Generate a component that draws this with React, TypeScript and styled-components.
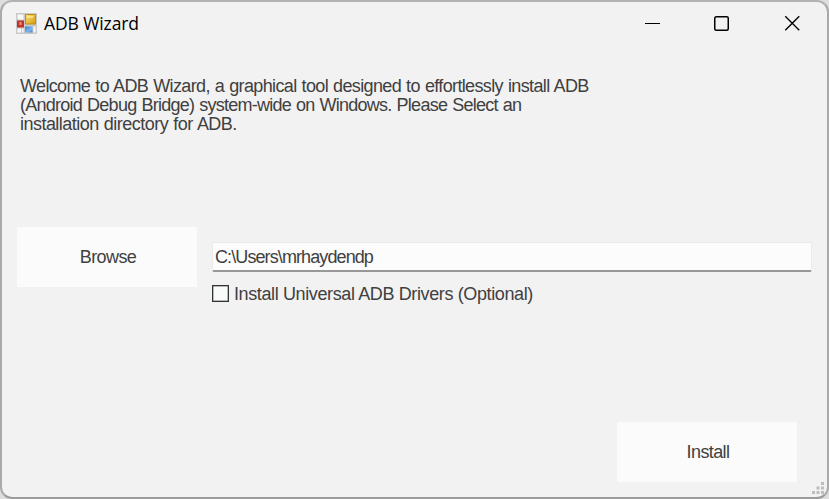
import React from "react";
import styled, { createGlobalStyle } from "styled-components";

const GlobalStyle = createGlobalStyle`
  * { box-sizing: border-box; }
  body { margin: 0; background: #dedede; }
`;

const Window = styled.main`
  width: 829px;
  height: 499px;
  display: flex;
  flex-direction: column;
  background: #f2f2f2;
  border: 2px solid #aaaaaa;
  border-top-color: #b3b3b3;
  border-bottom-color: #9c9c9c;
  border-radius: 12px;
  overflow: hidden;
  color: #404040;
  font-family: "Liberation Sans", Arial, sans-serif;
  font-size: 18px;
`;

const TitleBar = styled.header`
  height: 46px;
  flex: none;
  display: flex;
  align-items: center;
  padding: 0 0 4px 14px;
  color: #000;
`;

const Title = styled.h1`
  flex: 1;
  margin: 0 0 0 7px;
  font: 400 17.5px/24px "Open Sans", sans-serif;
  letter-spacing: -0.1px;
`;

const Controls = styled.div`
  display: flex;
`;

const ControlButton = styled.button`
  width: 70px;
  height: 42px;
  padding: 0;
  border: 0;
  background: none;
  display: grid;
  place-items: center;
`;

const Welcome = styled.p`
  margin: 29px 0 0 18px;
  line-height: 19px;
`;

const Line = styled.span<{ $spacing: number }>`
  display: block;
  width: max-content;
  letter-spacing: ${(p) => p.$spacing}px;
  word-spacing: 0.7px;
`;

const Form = styled.section`
  display: flex;
  gap: 15px;
  margin: 93px 0 0 15px;
`;

const ActionButton = styled.button`
  width: 180px;
  height: 60px;
  flex: none;
  padding: 0 0 0 2px;
  border: 0;
  background: #fbfbfb;
  color: inherit;
  font: inherit;
  letter-spacing: -0.6px;
`;

const Fields = styled.div`
  width: 600px;
  padding-top: 15px;
`;

const PathInput = styled.input`
  display: block;
  width: 600px;
  height: 30px;
  padding: 1px 0 0 2px;
  border: 1px solid #ebebeb;
  border-bottom: 2px solid #989898;
  border-radius: 2px;
  outline: 0;
  background: #fcfcfc;
  color: inherit;
  font: inherit;
  letter-spacing: -0.9px;
`;

const Option = styled.label`
  display: flex;
  align-items: center;
  height: 20px;
  margin-top: 12px;
  gap: 5px;
  white-space: nowrap;
  letter-spacing: -0.38px;
`;

const Checkbox = styled.input`
  appearance: none;
  width: 17px;
  height: 17px;
  margin: 0 0 1px;
  border: 1px solid #333;
  box-shadow: inset 0 0 0 0.5px #777;
  background: #f9fbfa;
`;

const Footer = styled.footer`
  flex: 1;
  display: flex;
  justify-content: flex-end;
  align-items: flex-end;
  padding-bottom: 15px;
`;

const Grip = styled.svg`
  flex: none;
  margin: 0 2px -13px 15px;
`;

const AppIcon = () => (
  <svg width="21" height="21" viewBox="0 0 21 21">
    <defs>
      <linearGradient id="gold" x1="0" y1="0" x2="1" y2="1">
        <stop offset="0" stopColor="#fbe07a" />
        <stop offset="1" stopColor="#d79a08" />
      </linearGradient>
      <linearGradient id="blue" x1="0" y1="0" x2="1" y2="1">
        <stop offset="0" stopColor="#3a80d2" />
        <stop offset=".6" stopColor="#7db4ee" />
        <stop offset="1" stopColor="#4384cd" />
      </linearGradient>
    </defs>
    <path d="M0 0h21v21H0z" fill="#c9c9c9" />
    <path d="M1.5 1.5h6v5h-6zM1.5 15.5h3.5v4H1.5zM6 15.5h1.5v4H6zM17.5 13.5h2v6h-2z" fill="#f8f8f8" />
    <path d="M9.5 1.5h10v9.5h-10z" fill="url(#gold)" stroke="#c08d18" />
    <path d="M11 3h6v2h-6z" fill="#fff0a8" opacity=".65" />
    <path d="M1 7.5h7v7H1z" fill="#c0332a" />
    <path d="M3.5 9h2v3h-2z" fill="#ee9485" />
    <path d="M9 13.5h7.5v6H9z" fill="url(#blue)" />
  </svg>
);

const gripDots = [
  [9, 0], [4.5, 4.5], [9, 4.5], [0, 9], [4.5, 9], [9, 9],
];

export default function App() {
  return (
    <>
      <GlobalStyle />
      <Window>
        <TitleBar>
          <AppIcon />
          <Title>ADB Wizard</Title>
          <Controls>
            <ControlButton aria-label="Minimize">
              <svg width="16" height="16"><path d="M1 8.5h15" stroke="#000" strokeWidth="1.2" /></svg>
            </ControlButton>
            <ControlButton aria-label="Maximize">
              <svg width="16" height="16"><rect x=".75" y="1.75" width="13.5" height="13.5" rx="1.5" fill="none" stroke="#000" strokeWidth="1.5" /></svg>
            </ControlButton>
            <ControlButton aria-label="Close">
              <svg width="16" height="16"><path d="M1.25 1.25l14 14M15.25 1.25l-14 14" stroke="#000" strokeWidth="1.4" /></svg>
            </ControlButton>
          </Controls>
        </TitleBar>
        <Welcome>
          <Line $spacing={-0.64}>Welcome to ADB Wizard, a graphical tool designed to effortlessly install ADB</Line>
          <Line $spacing={-0.74}>(Android Debug Bridge) system-wide on Windows. Please Select an</Line>
          <Line $spacing={-0.53}>installation directory for ADB.</Line>
        </Welcome>
        <Form>
          <ActionButton>Browse</ActionButton>
          <Fields>
            <PathInput defaultValue={"C:\\Users\\mrhaydendp"} spellCheck={false} />
            <Option>
              <Checkbox type="checkbox" />
              Install Universal ADB Drivers (Optional)
            </Option>
          </Fields>
        </Form>
        <Footer>
          <ActionButton>Install</ActionButton>
          <Grip width="13" height="13">
            {gripDots.map(([x, y]) => (
              <rect key={`${x}-${y}`} x={x} y={y} width="3" height="3" fill="#bdbdbd" />
            ))}
          </Grip>
        </Footer>
      </Window>
    </>
  );
}
